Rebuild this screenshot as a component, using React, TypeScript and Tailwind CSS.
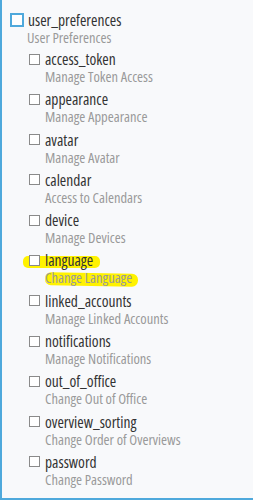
import React from "react";

const items: [string, string][] = [
  ["access_token", "Manage Token Access"],
  ["appearance", "Manage Appearance"],
  ["avatar", "Manage Avatar"],
  ["calendar", "Access to Calendars"],
  ["device", "Manage Devices"],
  ["language", "Change Language"],
  ["linked_accounts", "Manage Linked Accounts"],
  ["notifications", "Manage Notifications"],
  ["out_of_office", "Change Out of Office"],
  ["overview_sorting", "Change Order of Overviews"],
  ["password", "Change Password"],
];

export default function App() {
  return (
    <div
      className="relative h-[500px] w-[253px] overflow-hidden border-b-2 border-l-2 border-[#4fa9dc] bg-[#f8f9fb] text-[#333] [font-stretch:87.5%]"
      style={{ fontFamily: '"Open Sans", sans-serif' }}
    >
      <div className="absolute left-[21px] top-[256px] h-[12px] w-[77px] rounded-[5px] bg-[#fff200]" />
      <div className="absolute left-[43px] top-[273px] h-[13px] w-[93px] rotate-[1deg] rounded-[6px] bg-[#fff200]" />
      <div className="relative pl-[8px] pt-[10px]">
        <div className="flex items-center gap-[4px] h-[20px]">
          <span className="h-[14px] w-[14px] shrink-0 border-2 border-[#4fa9dc] bg-white" />
          <span className="text-[15.5px] leading-[20px]">user_preferences</span>
        </div>
        <div className="pl-[17px] text-[14.5px] leading-[16px] text-[#9a9a9a]">User Preferences</div>
        <div className="mt-[2px] pl-[19px]">
          {items.map(([n, d]) => (
            <div key={n} className="h-[40.3px] pt-[1px]">
              <div className="flex h-[20px] items-center gap-[5px]">
                <span className="h-[11px] w-[11px] shrink-0 border border-[#8a8a8a] bg-white" />
                <span className="text-[15.5px] leading-[20px]">{n}</span>
              </div>
              <div className="pl-[16px] text-[14.5px] leading-[16px] text-[#9a9a9a]">{d}</div>
            </div>
          ))}
        </div>
      </div>
    </div>
  );
}
